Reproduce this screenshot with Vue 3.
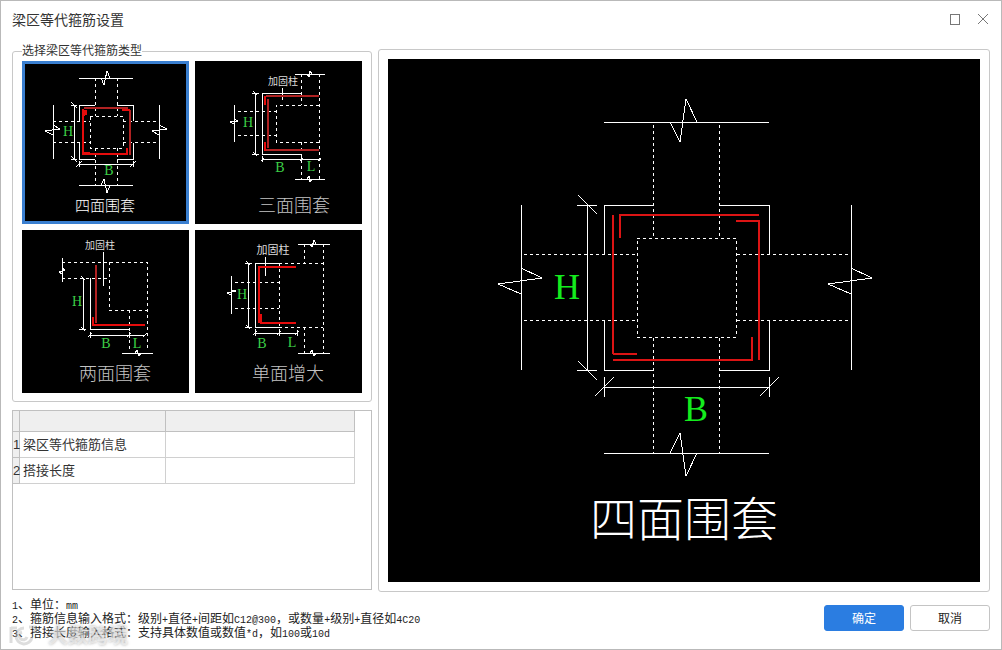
<template>
  <div class="dialog">
    <header class="title-bar">
      <h1>梁区等代箍筋设置</h1>
      <div class="window-actions">
        <button type="button" aria-label="最大化">
          <svg width="12" height="12" viewBox="0 0 12 12">
            <path d="M1 1H10V11H1Z" shape-rendering="crispEdges" />
          </svg>
        </button>
        <button type="button" aria-label="关闭">
          <svg width="12" height="12" viewBox="0 0 12 12">
            <path d="M1 1L11 11M11 1L1 11" />
          </svg>
        </button>
      </div>
    </header>

    <main class="content">
      <div class="side">
        <fieldset class="type-group">
          <legend>选择梁区等代箍筋类型</legend>
          <div class="type-grid">
            <button
              v-for="(item, index) in types"
              :key="item.name"
              type="button"
              class="type-item"
              :class="{ active: selected === index }"
              :aria-pressed="selected === index"
              @click="selected = index"
            >
              <svg class="drawing" viewBox="0 0 167 163">
                <path class="dash" :d="item.dash" />
                <path class="line" :d="item.line" />
                <path class="bar dark" :d="item.barDark" />
                <path class="bar" :d="item.bar" />
                <text
                  v-for="t in item.labels"
                  :key="t.text"
                  :class="t.type"
                  :x="t.x"
                  :y="t.y"
                >{{ t.text }}</text>
              </svg>
            </button>
          </div>
        </fieldset>

        <div class="param-panel">
          <table>
            <thead>
              <tr>
                <th class="col-no"></th>
                <th class="col-name"></th>
                <th class="col-value"></th>
              </tr>
            </thead>
            <tbody>
              <tr v-for="(row, index) in params" :key="row.name">
                <th scope="row">{{ index + 1 }}</th>
                <td><label :for="'param' + index">{{ row.name }}</label></td>
                <td><input :id="'param' + index" v-model="row.value" type="text" /></td>
              </tr>
            </tbody>
          </table>
        </div>
      </div>

      <section class="preview">
        <svg class="drawing large" :viewBox="preview.viewBox">
          <path class="dash" :d="preview.dash" />
          <path class="line" :d="preview.line" />
          <path class="bar dark" :d="preview.barDark" />
          <path class="bar" :d="preview.bar" />
          <text
            v-for="t in preview.labels"
            :key="t.text"
            :class="t.type"
            :x="t.x"
            :y="t.y"
          >{{ t.text }}</text>
        </svg>
      </section>
    </main>

    <footer class="footer">
      <div class="notes">
        <p v-for="note in notes" :key="note"><span
          v-for="(part, index) in splitNote(note)"
          :key="index"
          :class="{ latin: isLatin(part) }"
        >{{ part }}</span></p>
        <div class="watermark">
          <svg width="32" height="24" viewBox="0 0 32 24">
            <path d="M3 4V20M3 5H9M16 5A8 8 0 1 0 24 14M14 9A4 4 0 1 0 19 14M21 4H27V10" />
          </svg>
          <span>大数跨境</span>
        </div>
      </div>
      <div class="actions">
        <button type="button" class="btn-primary">确定</button>
        <button type="button" class="btn-secondary">取消</button>
      </div>
    </footer>
  </div>
</template>

<script setup>
import { ref, computed } from 'vue'

const selected = ref(0)

const params = ref([
  { name: '梁区等代箍筋信息', value: '' },
  { name: '搭接长度', value: '' }
])

const notes = [
  '1、单位：mm',
  '2、箍筋信息输入格式：级别+直径+间距如C12@300，或数量+级别+直径如4C20',
  '3、搭接长度输入格式：支持具体数值或数值*d，如100或10d'
]

// 西文用半角等宽字体
function splitNote(note) {
  return note.match(/[\x21-\x7e]+|[^\x21-\x7e]+/g)
}

function isLatin(part) {
  return /^[\x21-\x7e]/.test(part)
}

const types = [
  {
    name: '四面围套',
    dash: 'M73 17V55M95 17V55M73 87V124M95 87V124M31 60H68M31 81H68M101 60H137M101 81H137M68 55H101V87H68Z',
    line: 'M57 17H111M79 17L82 24L85 10L88 17 M57 124H111M79 124L82 118L85 132L88 124 M31 44V98M31 64L38 68L23 70L31 74 M137 44V98M137 64L145 68L130 70L137 74 M73 44H57V60M95 44H111V60M57 82V98H73M111 82V98H95 M52 44V98M49 44H55M49 98H55M49 41L55 47M49 95L55 101 M57 103H111M57 100V106M111 100V106M54 106L60 100M108 106L114 100',
    barDark: 'M62 47H106M108 49V94',
    bar: 'M61 48V93H105V87M62 49V55M64 49V54M100 49H108M61 92H68',
    labels: [
      { text: 'H', type: 'dim', x: 46, y: 75 },
      { text: 'B', type: 'dim', x: 87, y: 114 },
      { text: '四面围套', type: 'caption small', x: 83, y: 150 }
    ]
  },
  {
    name: '三面围套',
    dash: 'M106 13V44M124 13V118M106 81V118M43 50H81M43 74H81M124 44H81V81H124',
    line: 'M100 13H130M112 13L114 16L115 10L117 13 M100 118H130M112 118L114 115L115 121L117 118 M106 32H67V93H106 M87 27V39 M39 44V81M39 58L43 60L35 61L39 63 M60 32V93M57 32H64M57 93H64M58 30L62 34M58 91L62 95 M67 98H126M67 95V101M106 96V101M66 100L69 97M105 100L108 97M123 100L126 97',
    barDark: 'M71 35H124M73 38V87M71 89H124',
    bar: 'M70 35V44M70 81V90',
    labels: [
      { text: '加固柱', type: 'remark', x: 88, y: 24 },
      { text: 'H', type: 'dim', x: 53, y: 66 },
      { text: 'B', type: 'dim', x: 85, y: 111 },
      { text: 'L', type: 'dim', x: 116, y: 110 },
      { text: '三面围套', type: 'caption', x: 99, y: 151 }
    ]
  },
  {
    name: '两面围套',
    dash: 'M40 32H125V121M40 48H87M87 32V80H125M107 80V121',
    line: 'M40 28V52M40 38L43 40L37 42L40 44 M68 48V99H107 M81 22V56 M61 48V99M57 99H64M59 46L63 50M59 97L63 101 M68 105H123M68 102V108M107 102V108M66 107L70 103M105 107L109 103M121 107L125 103 M100 123H131M113 123L115 120L117 126L119 123',
    barDark: 'M74 35V93',
    bar: 'M71 87V95H123',
    labels: [
      { text: '加固柱', type: 'remark', x: 78, y: 19 },
      { text: 'H', type: 'dim', x: 55, y: 76 },
      { text: 'B', type: 'dim', x: 84, y: 118 },
      { text: 'L', type: 'dim', x: 115, y: 118 },
      { text: '两面围套', type: 'caption', x: 93, y: 150 }
    ]
  },
  {
    name: '单面增大',
    dash: 'M109 14V33M128 14V123M84 33H128M84 97H128M109 97V123M84 33V97M40 52H84M40 78H84',
    line: 'M103 14H135M115 14L117 17L119 10L121 14 M103 123H135M115 123L117 120L119 126L121 123 M84 33H60V97H84 M70 27V46 M36 46V84M36 60L41 61L32 63L36 65 M53 33V97M50 33H57M50 97H57M51 31L55 35M51 95L55 99 M60 103H102M60 99V106M84 99V106M102 100V106M58 105L62 101M82 105L86 101M100 105L104 101',
    barDark: '',
    bar: 'M101 37H64V93M66 84V93H101',
    labels: [
      { text: '加固柱', type: 'remark wide', x: 78, y: 24 },
      { text: 'H', type: 'dim', x: 47, y: 69 },
      { text: 'B', type: 'dim', x: 67, y: 118 },
      { text: 'L', type: 'dim', x: 97, y: 117 },
      { text: '单面增大', type: 'caption', x: 93, y: 150 }
    ]
  }
]

// 四面围套大样图
const detail = {
  viewBox: '0 0 592 523',
  dash: 'M265 66V179M331 66V179M265 279V394M331 279V394M136 195H249M136 261H249M349 195H463M349 261H463M249 179H348V278H249Z',
  line: 'M216 63H381M282 63L292 83L298 40L309 63 M216 394H381M282 394L292 374L298 417L309 394 M133 146V311M133 209L154 219L110 225L133 235 M463 146V311M463 209L484 219L440 225L463 235 M265 146H216V195M331 146H381V195M216 262V311H265M381 262V311H331 M199 146V311M189 146H209M189 311H209M190 136L209 155M190 302L209 321 M216 328H381M216 318V338M381 318V338M207 337L226 318M372 337L391 318',
  barDark: 'M232 157V179M225 295H249M225 301H364V278',
  bar: 'M225 156V295M231 156H371M348 162H371V301',
  labels: [
    { text: 'H', type: 'dim big', x: 179, y: 240 },
    { text: 'B', type: 'dim big', x: 308, y: 362 },
    { text: '四面围套', type: 'caption big', x: 296, y: 477 }
  ]
}

const preview = computed(() => {
  if (selected.value === 0) return detail
  return { viewBox: '0 0 167 163', ...types[selected.value] }
})
</script>

<style>
body {
  margin: 0;
}
</style>

<style scoped>
.dialog {
  box-sizing: border-box;
  display: flex;
  flex-direction: column;
  min-height: 100vh;
  padding: 0 11px;
  border: 1px solid #b9b9b9;
  background: #fff;
  color: #333;
  font-family: "Liberation Sans", "Noto Sans CJK SC", sans-serif;
  font-size: 12px;
}

button {
  padding: 0;
  font: inherit;
  cursor: pointer;
}

.title-bar {
  display: flex;
  align-items: center;
  justify-content: space-between;
  height: 36px;
  margin-bottom: 6px;
}

.title-bar h1 {
  margin: 0;
  font-size: 14px;
  font-weight: 400;
}

.window-actions {
  display: flex;
  gap: 16px;
  margin-right: 1px;
}

.window-actions button {
  display: flex;
  border: none;
  background: none;
}

.window-actions path {
  fill: none;
  stroke: #777;
}

.content {
  display: grid;
  flex: 1;
  grid-template-columns: 360px 1fr;
  gap: 6px;
}

.side {
  display: flex;
  flex-direction: column;
  gap: 8px;
  padding-bottom: 2px;
}

.type-group {
  margin: 0;
  padding: 2px 9px 8px;
  border: 1px solid #c8c8c8;
  border-radius: 3px;
}

.type-group legend {
  padding: 0;
  line-height: 16px;
}

.type-grid {
  display: grid;
  grid-template-columns: 1fr 1fr;
  gap: 6px;
}

.type-item {
  display: block;
  border: none;
  background: #000;
}

.type-item.active {
  outline: 3px solid #3a7fd0;
  outline-offset: -3px;
}

.drawing {
  display: block;
  width: 100%;
  background: #000;
}

.drawing path {
  fill: none;
  shape-rendering: crispEdges;
}

.drawing .line {
  stroke: #fff;
}

.drawing .dash {
  stroke: #fff;
  stroke-dasharray: 3 3;
}

.drawing .bar {
  stroke: #e60c0c;
  stroke-width: 2;
}

.drawing .bar.dark {
  stroke: #b02222;
}

.drawing.large .bar {
  stroke: #dc1414;
}

.drawing text {
  text-anchor: middle;
}

.dim {
  fill: #3cd046;
  font-family: "Liberation Serif", serif;
  font-size: 14px;
}

.dim.big {
  fill: #14ec1e;
  font-size: 36px;
}

.remark {
  fill: #ddd;
  font-family: "Noto Sans CJK SC", sans-serif;
  font-size: 10px;
}

.remark.wide {
  font-size: 11px;
}

.caption {
  fill: #c4c4c4;
  font-family: "Noto Sans CJK SC", sans-serif;
  font-size: 18px;
  font-weight: 300;
}

.caption.small {
  fill: #fff;
  font-size: 15px;
}

.caption.big {
  fill: #fff;
  font-size: 47px;
}

.param-panel {
  flex: 1;
  border: 1px solid #c0c0c0;
}

table {
  table-layout: fixed;
  width: 342px;
  border-spacing: 0;
  font-size: 13px;
}

th,
td {
  box-sizing: border-box;
  height: 26px;
  padding: 0;
  border-right: 1px solid #d0d0d0;
  border-bottom: 1px solid #d0d0d0;
  font-weight: 400;
  text-align: left;
}

th {
  border-color: #c0c0c0;
  background: #efefef;
}

thead th {
  height: 21px;
}

.col-no {
  width: 7px;
}

.col-name {
  width: 146px;
}

td label {
  display: block;
  padding: 0 0 2px 3px;
}

td input {
  display: block;
  box-sizing: border-box;
  width: 100%;
  height: 24px;
  padding: 0 3px;
  border: none;
  outline: none;
  background: none;
  font: inherit;
}

.preview {
  display: flex;
  margin-top: 6px;
  padding: 9px;
  border: 1px solid #c8c8c8;
  border-radius: 3px;
}

.footer {
  display: flex;
  justify-content: space-between;
  padding: 5px 0 10px;
}

.notes {
  position: relative;
  color: #222;
  font-family: "Noto Sans CJK SC", sans-serif;
  line-height: 14px;
}

.notes p {
  height: 14px;
  margin: 0;
}

.latin {
  font-family: "Liberation Mono", monospace;
  font-size: 10px;
}

.watermark {
  position: absolute;
  bottom: -8px;
  left: -4px;
  display: flex;
  align-items: center;
  gap: 8px;
  color: rgba(255, 255, 255, 0.5);
  font-size: 20px;
  font-weight: 700;
  line-height: 24px;
  text-shadow: 0 0 3px rgba(120, 120, 120, 0.6);
  pointer-events: none;
}

.watermark path {
  fill: none;
  stroke: rgba(170, 170, 170, 0.4);
  stroke-width: 3;
}

.actions {
  display: flex;
  align-items: flex-start;
  gap: 6px;
  padding-top: 8px;
}

.btn-primary,
.btn-secondary {
  width: 80px;
  height: 26px;
  padding-bottom: 2px;
  border: 1px solid #2b7de1;
  border-radius: 3px;
}

.btn-primary {
  background: #2b7de1;
  color: #fff;
}

.btn-secondary {
  border-color: #c4c4c4;
  background: #fff;
  color: #222;
}
</style>
